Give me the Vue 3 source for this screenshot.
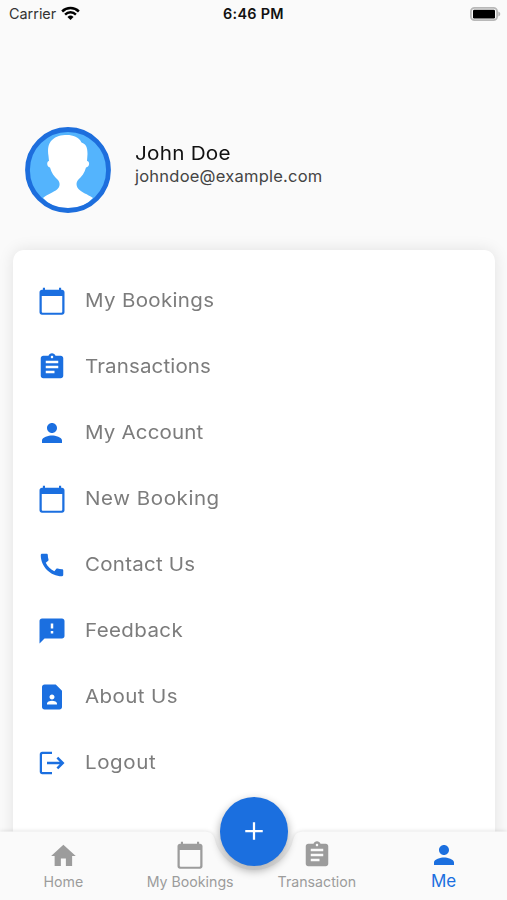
<script setup>
const icons = {
  calendar: 'M20 3h-.7V1.300h-1.700V3H6.400V1.300H4.700V3H4c-1.100 0-2 .9-2 2v16c0 1.100.9 2 2 2h16c1.100 0 2-.9 2-2V5c0-1.100-.9-2-2-2zm.2 17.500q0 .8-.8.8H4.600q-.8 0-.8-.8V8h16.400z',
  assignment: 'M19 3h-4.18C14.4 1.84 13.3 1 12 1s-2.4.84-2.82 2H5c-1.1 0-2 .9-2 2v14c0 1.1.9 2 2 2h14c1.1 0 2-.9 2-2V5c0-1.1-.9-2-2-2zm-7 0c.55 0 1 .45 1 1s-.45 1-1 1-1-.45-1-1 .45-1 1-1zm2 14H7v-2h7v2zm3-4H7v-2h10v2zm0-4H7V7h10v2z',
  person: 'M12 12c2.21 0 4-1.79 4-4s-1.79-4-4-4-4 1.79-4 4 1.79 4 4 4zm0 2c-2.67 0-8 1.34-8 4v2h16v-2c0-2.66-5.33-4-8-4z',
  phone: 'M20.01 15.38c-1.23 0-2.42-.2-3.53-.56-.35-.12-.74-.03-1.01.24l-1.57 1.97c-2.83-1.35-5.48-3.9-6.89-6.83l1.95-1.66c.27-.28.35-.67.24-1.02-.37-1.11-.56-2.3-.56-3.53 0-.54-.45-.99-.99-.99H4.19C3.65 3 3 3.24 3 3.99 3 13.28 10.73 21 20.01 21c.71 0 .99-.63.99-1.18v-3.45c0-.54-.45-.99-.99-.99z',
  feedback: 'M20 2H4c-1.1 0-1.99.9-1.99 2L2 22l4-4h14c1.1 0 2-.9 2-2V4c0-1.1-.9-2-2-2zm-7 12h-2v-2h2v2zm0-4h-2V6h2v4z',
  contact: 'M15 2H6c-1.1 0-2 .9-2 2v16c0 1.1.9 2 2 2h12c1.1 0 2-.9 2-2V7l-5-5zm-3 8c1.1 0 2 .9 2 2s-.9 2-2 2-2-.9-2-2 .9-2 2-2zm4 8H8v-.57c0-.81.48-1.53 1.22-1.85.85-.37 1.79-.58 2.78-.58s1.93.21 2.78.58c.74.32 1.22 1.04 1.22 1.85V18z',
  logout: 'M17 7l-1.41 1.41L18.17 11H8v2h10.17l-2.58 2.58L17 17l5-5zM4.500 4.800H12V3H4.200C3 3 2.200 3.900 2.200 5v14c0 1.100.8 2 2 2H12v-1.800H4.500q-.5 0-.5-.5V5.300q0-.5.5-.5z',
  home: 'M10.300 20.800v-6h4v6h5v-8h2.900L12.300 3.800 2.500 12.800h2.800v8z',
}
const menu = [
  { label: 'My Bookings', icon: 'calendar', tracking: 0.3 },
  { label: 'Transactions', icon: 'assignment', tracking: 0.12 },
  { label: 'My Account', icon: 'person', tracking: 0.15 },
  { label: 'New Booking', icon: 'calendar', tracking: 0.52 },
  { label: 'Contact Us', icon: 'phone', tracking: 0.22 },
  { label: 'Feedback', icon: 'feedback', tracking: 0.35 },
  { label: 'About Us', icon: 'contact', tracking: 0.38 },
  { label: 'Logout', icon: 'logout', tracking: 0.55 },
]
const tabs = [
  { label: 'Home', icon: 'home' },
  { label: 'My Bookings', icon: 'calendar' },
  { label: 'Transaction', icon: 'assignment' },
  { label: 'Me', icon: 'person', active: true },
]
</script>

<template>
  <div class="screen">
    <header class="status">
      <div class="carrier">
        <span>Carrier</span>
        <svg class="wifi" viewBox="0 0 20 15">
          <path d="M1.2 5.4a12.6 12.6 0 0 1 17.6 0" />
          <path d="M4.3 8.6a8.2 8.2 0 0 1 11.4 0" />
          <path class="dot" d="M6.8 11.1a4.7 4.7 0 0 1 6.4 0L10 14.4z" />
        </svg>
      </div>
      <div class="time">6:46 PM</div>
      <svg class="battery" viewBox="0 0 31 14">
        <rect x=".9" y=".9" width="26.200" height="12.200" rx="3.600" fill="#fafafa" stroke="#b8b8b8" stroke-width="1.800" />
        <rect x="3" y="2.700" width="22" height="8.800" rx="1.200" fill="#000" />
        <path d="M28.300 4.500q2 .8 2 2.500t-2 2.500z" fill="#b5b5b5" />
      </svg>
    </header>

    <section class="profile">
      <svg class="avatar" viewBox="0 0 86 86">
        <circle cx="43" cy="43" r="40.5" fill="#54b4fd" />
        <path fill="#fff" d="M42 8C36 8 31 9 27 13C23 17 22.500 22 23.500 29L24 34C21.500 34 21.500 40 25 40.500C26.500 46 29 49.500 33 53C35.500 56 35 60 32 62.500C29 65 23 67 18 71Q28 82 43 82T68 71C62 67 57 65.500 54 62.500C51.500 60 50.500 56 53 53C57 49.500 59.500 46 61 40.500C65 40 65 34 62 34L62.500 27C62.500 20 61 17 56.500 15.500C54 10 48 8 42 8Z" />
        <circle cx="43" cy="43" r="40.5" fill="none" stroke="#1d6edd" stroke-width="4.8" />
      </svg>
      <div class="who">
        <div class="name">John Doe</div>
        <div class="email">johndoe@example.com</div>
      </div>
    </section>

    <main class="card">
      <div v-for="item in menu" :key="item.label" class="row">
        <svg class="icon" viewBox="0 0 24 24"><path :d="icons[item.icon]" /></svg>
        <span class="label" :style="{ letterSpacing: item.tracking + 'px' }">{{ item.label }}</span>
      </div>
    </main>

    <nav class="bar">
      <svg class="bar-bg" viewBox="0 0 507 84">
        <path d="M0 15.500H202C211 15.500 213 18 214.500 22.500A40.500 40.500 0 0 0 293.500 22.500C295 18 297 15.500 306 15.500H507V84H0z" />
      </svg>
      <button class="fab">
        <svg viewBox="0 0 24 24"><path d="M19 12.900h-6.100V19h-1.800v-6.100H5v-1.800h6.100V5h1.800v6.100H19z" /></svg>
      </button>
      <div v-for="tab in tabs" :key="tab.label" class="tab" :class="{ active: tab.active }">
        <svg viewBox="0 0 24 24"><path :d="icons[tab.icon]" /></svg>
        <span>{{ tab.label }}</span>
      </div>
    </nav>
  </div>
</template>

<style>
body { margin: 0; background: #fafafa; }
</style>

<style scoped>
.screen {
  position: relative;
  box-sizing: border-box;
  width: 507px;
  height: 900px;
  overflow: hidden;
  background: #fafafa;
  font-family: Inter, "Liberation Sans", sans-serif;
  display: flex;
  flex-direction: column;
}
.status {
  display: grid;
  grid-template-columns: 1fr auto 1fr;
  align-items: center;
  height: 27px;
  flex: none;
  padding: 0 6px 0 9px;
  color: #111;
  font-size: 14.4px;
}
.carrier { display: flex; align-items: center; gap: 5px; color: #333; }
.wifi { width: 19px; height: 15px; fill: none; stroke: #000; stroke-width: 2.6; }
.wifi .dot { fill: #000; stroke: none; }
.time { font-weight: 600; letter-spacing: .3px; margin-right: 3px; }
.battery { width: 31px; height: 14px; justify-self: end; }
.profile {
  display: flex;
  align-items: center;
  gap: 24px;
  height: 86px;
  flex: none;
  padding: 100px 25px 0;
}
.avatar { width: 86px; height: 86px; }
.who { padding-bottom: 13px; }
.name {
  font-size: 19.2px;
  line-height: 24px;
  font-weight: 400;
  letter-spacing: .2px;
  color: #111;
  transform: scaleX(1.08);
  transform-origin: left center;
}
.email { font-size: 16.5px; line-height: 22px; color: #444; letter-spacing: .23px; }
.card {
  margin: 37px 12px 0 13px;
  padding-top: 18px;
  height: 660px;
  flex: none;
  background: #fff;
  border-radius: 11px;
  box-shadow: 0 0 16px rgba(0, 0, 0, .1);
}
.row { display: flex; align-items: center; gap: 18px; height: 66px; padding-left: 24px; }
.icon { width: 30px; height: 30px; fill: #1b6fe0; }
.label {
  padding-bottom: 1px;
  font-size: 19px;
  font-weight: 400;
  color: #7c7c7c;
  transform: scaleX(1.08);
  transform-origin: left center;
}
.bar {
  position: absolute;
  left: 0;
  right: 0;
  bottom: 0;
  display: grid;
  grid-template-columns: repeat(4, 1fr);
  height: 69px;
}
.bar-bg {
  position: absolute;
  left: 0;
  bottom: 0;
  width: 507px;
  height: 84px;
  fill: #fafafa;
  filter: drop-shadow(0 0 2px rgba(0, 0, 0, .14));
}
.fab {
  position: absolute;
  left: 219.5px;
  top: -34px;
  width: 68.6px;
  height: 68.6px;
  padding: 0;
  border: 0;
  border-radius: 50%;
  display: grid;
  place-items: center;
  background: #1b6fdf;
  box-shadow: 0 4px 9px 1px rgba(0, 0, 0, .3);
}
.fab svg { width: 30px; height: 30px; fill: #fff; }
.tab {
  position: relative;
  display: flex;
  flex-direction: column;
  align-items: center;
  padding-top: 9px;
  color: #9c9c9c;
  font-size: 14.2px;
  line-height: 20px;
}
.tab svg { width: 30px; height: 30px; fill: currentColor; }
.tab span { margin-top: 2px; white-space: nowrap; }
.tab.active { color: #1b6fdf; font-size: 17px; }
.tab.active span { margin-top: 1px; }
</style>
